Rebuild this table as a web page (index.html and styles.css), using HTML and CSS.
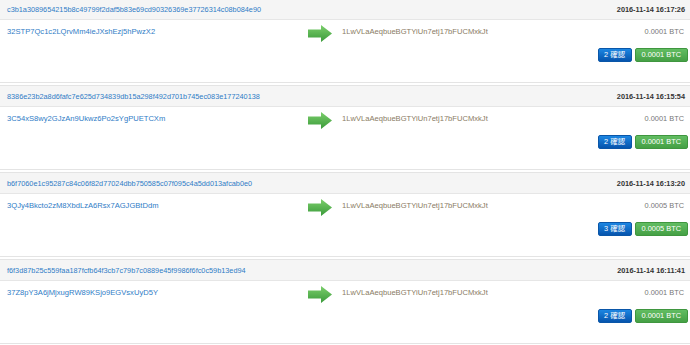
FILE: index.html
```html
<!DOCTYPE html>
<html lang="ja">
<head>
<meta charset="utf-8">
<title>Transactions</title>
<link rel="stylesheet" href="styles.css">
</head>
<body>
<div class="list">
  <section class="tx">
    <div class="tx-head"><a class="hash" href="#">c3b1a3089654215b8c49799f2daf5b83e69cd90326369e37726314c08b084e90</a><span class="time">2016-11-14 16:17:26</span></div>
    <div class="tx-body">
      <div class="from"><a href="#">32STP7Qc1c2LQrvMm4ieJXshEzj5hPwzX2</a></div>
      <div class="arrow"><svg width="26" height="18" viewBox="0 0 26 18"><defs><linearGradient id="g1" x1="0" y1="0" x2="0" y2="1"><stop offset="0" stop-color="#7ccf6c"/><stop offset="1" stop-color="#3a9a3a"/></linearGradient></defs><path d="M0 4.5 H13 V0 L24 8.5 L13 17 V12.5 H0 Z" fill="url(#g1)"/></svg></div>
      <div class="to">
        <div class="to-row"><span class="to-addr">1LwVLaAeqbueBGTYiUn7etj17bFUCMxkJt</span><span class="amt">0.0001 BTC</span></div>
        <div class="badges"><span class="badge blue">2 確認</span><span class="badge green">0.0001 BTC</span></div>
      </div>
    </div>
  </section>
  <section class="tx">
    <div class="tx-head"><a class="hash" href="#">8386e23b2a8d6fafc7e625d734839db15a298f492d701b745ec083e177240138</a><span class="time">2016-11-14 16:15:54</span></div>
    <div class="tx-body">
      <div class="from"><a href="#">3C54xS8wy2GJzAn9Ukwz6Po2sYgPUETCXm</a></div>
      <div class="arrow"><svg width="26" height="18" viewBox="0 0 26 18"><path d="M0 4.5 H13 V0 L24 8.5 L13 17 V12.5 H0 Z" fill="url(#g1)"/></svg></div>
      <div class="to">
        <div class="to-row"><span class="to-addr">1LwVLaAeqbueBGTYiUn7etj17bFUCMxkJt</span><span class="amt">0.0001 BTC</span></div>
        <div class="badges"><span class="badge blue">2 確認</span><span class="badge green">0.0001 BTC</span></div>
      </div>
    </div>
  </section>
  <section class="tx">
    <div class="tx-head"><a class="hash" href="#">b6f7060e1c95287c84c06f82d77024dbb750585c07f095c4a5dd013afcab0e0</a><span class="time">2016-11-14 16:13:20</span></div>
    <div class="tx-body">
      <div class="from"><a href="#">3QJy4Bkcto2zM8XbdLzA6Rsx7AGJGBtDdm</a></div>
      <div class="arrow"><svg width="26" height="18" viewBox="0 0 26 18"><path d="M0 4.5 H13 V0 L24 8.5 L13 17 V12.5 H0 Z" fill="url(#g1)"/></svg></div>
      <div class="to">
        <div class="to-row"><span class="to-addr">1LwVLaAeqbueBGTYiUn7etj17bFUCMxkJt</span><span class="amt">0.0005 BTC</span></div>
        <div class="badges"><span class="badge blue">3 確認</span><span class="badge green">0.0005 BTC</span></div>
      </div>
    </div>
  </section>
  <section class="tx">
    <div class="tx-head"><a class="hash" href="#">f6f3d87b25c559faa187fcfb64f3cb7c79b7c0889e45f9986f6fc0c59b13ed94</a><span class="time">2016-11-14 16:11:41</span></div>
    <div class="tx-body">
      <div class="from"><a href="#">37Z8pY3A6jMjxugRW89KSjo9EGVsxUyD5Y</a></div>
      <div class="arrow"><svg width="26" height="18" viewBox="0 0 26 18"><path d="M0 4.5 H13 V0 L24 8.5 L13 17 V12.5 H0 Z" fill="url(#g1)"/></svg></div>
      <div class="to">
        <div class="to-row"><span class="to-addr">1LwVLaAeqbueBGTYiUn7etj17bFUCMxkJt</span><span class="amt">0.0001 BTC</span></div>
        <div class="badges"><span class="badge blue">2 確認</span><span class="badge green">0.0001 BTC</span></div>
      </div>
    </div>
  </section>
</div>
</body>
</html>
```

FILE: styles.css
```css
html, body {
  margin: 0;
  padding: 0;
  background: #fff;
}
body {
  font-family: "Liberation Sans", Arial, "Noto Sans CJK JP", sans-serif;
  font-size: 7.3px;
  color: #333;
  overflow: hidden;
}
.list {
  margin-top: -2px;
  display: flex;
  flex-direction: column;
  gap: 2px;
}
.tx {
  border-top: 1px solid #e4e4e4;
  border-bottom: 1px solid #e4e4e4;
  background: #fff;
}
.tx-head {
  height: 20px;
  display: flex;
  align-items: center;
  justify-content: space-between;
  padding: 0 5px 0 7px;
  background: #f5f5f5;
  border-bottom: 1px solid #e6e6e6;
}
a {
  color: #2f7cc6;
  text-decoration: none;
}
.time {
  font-weight: bold;
  color: #333;
}
.tx-body {
  height: 62px;
  box-sizing: border-box;
  display: grid;
  grid-template-columns: 301px 34px 1fr;
  padding: 6px 6px 0 7px;
  line-height: 12px;
  font-size: 7.6px;
}
.arrow svg {
  display: block;
  margin-top: -1px;
}
.to-row {
  display: flex;
  justify-content: space-between;
}
.to-addr {
  color: #8a7b64;
}
.amt {
  color: #777;
  font-size: 7.4px;
}
.badges {
  display: flex;
  justify-content: flex-end;
  gap: 3px;
  margin-top: 10px;
  margin-right: -4px;
}
.badge {
  padding: 0 6px;
  border-radius: 2px;
  color: #fff;
  font-size: 7.4px;
  height: 12px;
  line-height: 12px;
}
.badge.blue {
  padding: 0 5.5px;
  background: linear-gradient(#1c86e2, #0654ad);
  border: 1px solid #0a56a8;
}
.badge.green {
  background: linear-gradient(#62bd62, #45a045);
  border: 1px solid #3f963f;
}
```
